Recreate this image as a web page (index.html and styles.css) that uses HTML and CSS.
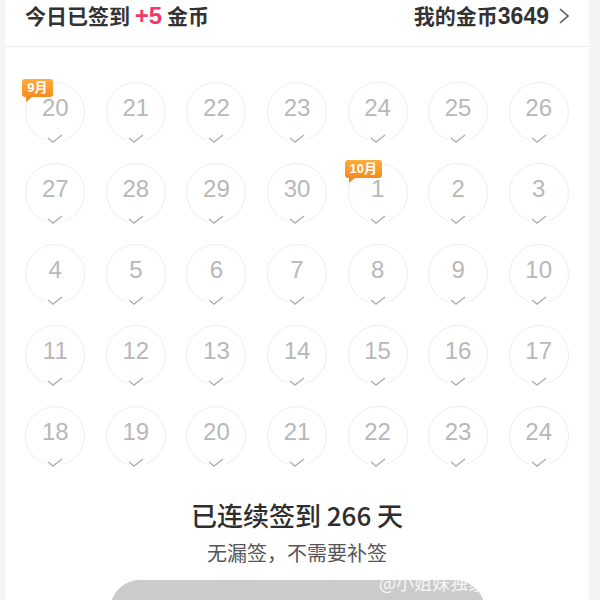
FILE: index.html
```html
<!DOCTYPE html>
<html lang="zh">
<head>
    <meta charset="UTF-8">
    <title>签到</title>
    <link rel="stylesheet" href="styles.css">
</head>
<body>
    <div class="card">
        <div class="header">
            <div class="today">今日已签到 <span class="plus">+5</span> 金币</div>
            <div class="coins">
                <div>我的金币<span class="total">3649</span></div>
                <svg class="chevron" width="12" height="18" viewBox="0 0 12 18"><path d="M2 2 L10 9 L2 16" fill="none" stroke="#555" stroke-width="1.6"/></svg>
            </div>
        </div>

        <div class="calendar" id="calendar"></div>

        <div class="summary">
            <h2>已连续签到 266 天</h2>
            <p>无漏签，不需要补签</p>
        </div>

        <div class="btn"></div>
        <div class="watermark">@小姐妹独家</div>
    </div>

    <script>
        const days = [20,21,22,23,24,25,26,27,28,29,30,1,2,3,4,5,6,7,8,9,10,11,12,13,14,15,16,17,18,19,20,21,22,23,24];
        const calendar = document.getElementById('calendar');

        days.forEach((d, i) => {
            const cell = document.createElement('div');
            cell.className = 'day';
            let badge = '';
            if (i === 0) badge = '<span class="month">9月</span>';
            if (i === 11) badge = '<span class="month">10月</span>';
            cell.innerHTML = badge + '<span class="num">' + d + '</span>' +
                '<svg class="check" width="20" height="10" viewBox="0 0 20 10"><path d="M3 4 L8 8 L17 1" fill="none" stroke="#b0b0b0" stroke-width="1.4"/></svg>';
            calendar.appendChild(cell);
        });
    </script>
</body>
</html>
```

FILE: styles.css
```css
* { box-sizing: border-box; }
body {
    margin: 0;
    padding: 0;
    background: #f4f4f4;
    font-family: 'Noto Sans CJK SC', 'Liberation Sans', sans-serif;
    color: #333;
}
.card {
    position: relative;
    margin-left: 5px;
    width: 584px;
    height: 600px;
    background: #fff;
    overflow: hidden;
}
.header {
    display: flex;
    justify-content: space-between;
    align-items: center;
    height: 47px;
    padding: 0 19px 16px 20px;
    border-bottom: 1px solid #eeeeee;
    font-size: 21px;
    font-weight: bold;
    line-height: 30px;
}
.plus {
    color: #f2386a;
    font-size: 24px;
    line-height: 1;
    font-family: 'Liberation Sans', sans-serif;
}
.total {
    font-family: 'Liberation Sans', sans-serif;
    font-size: 23px;
    line-height: 1;
}
.coins {
    display: flex;
    align-items: center;
    gap: 9px;
}
.coins .chevron {
    margin-top: 1px;
}
.calendar {
    display: grid;
    grid-template-columns: repeat(7, 1fr);
    row-gap: 21px;
    padding: 35px 10px 0 10px;
}
.day {
    position: relative;
    justify-self: center;
    width: 60px;
    height: 60px;
    border: 1px solid #eeeeee;
    border-radius: 50%;
    display: flex;
    justify-content: center;
    align-items: center;
}
.num {
    font-family: 'Liberation Sans', sans-serif;
    font-size: 24px;
    color: #b8b8b8;
    margin-top: -8px;
}
.check {
    position: absolute;
    left: 19px;
    bottom: -3px;
    background: #fff;
}
.month {
    position: absolute;
    left: -4px;
    top: -4px;
    background: linear-gradient(#ffad3b, #f68b1f);
    color: #fff;
    font-size: 13px;
    font-weight: bold;
    line-height: 18px;
    padding: 0 5px;
    border-radius: 3px;
    font-family: 'Liberation Sans', 'Noto Sans CJK SC', sans-serif;
}
.month::after {
    content: "";
    position: absolute;
    left: 4px;
    bottom: -5px;
    border-left: 6px solid #f68b1f;
    border-bottom: 5px solid transparent;
}
.summary {
    text-align: center;
    margin-top: 33px;
}
.summary h2 {
    margin: 0;
    font-size: 26px;
    font-weight: 500;
    line-height: 32px;
    color: #2e2e2e;
}
.summary p {
    margin: 10px 0 0;
    font-size: 20px;
    line-height: 24px;
    color: #555;
}
.btn {
    width: 375px;
    height: 60px;
    margin: 15px auto 0;
    background: #cbcbcb;
    border-radius: 30px;
}
.watermark {
    position: absolute;
    left: 374px;
    top: 569px;
    color: rgba(255,255,255,0.85);
    font-size: 18px;
}
```
